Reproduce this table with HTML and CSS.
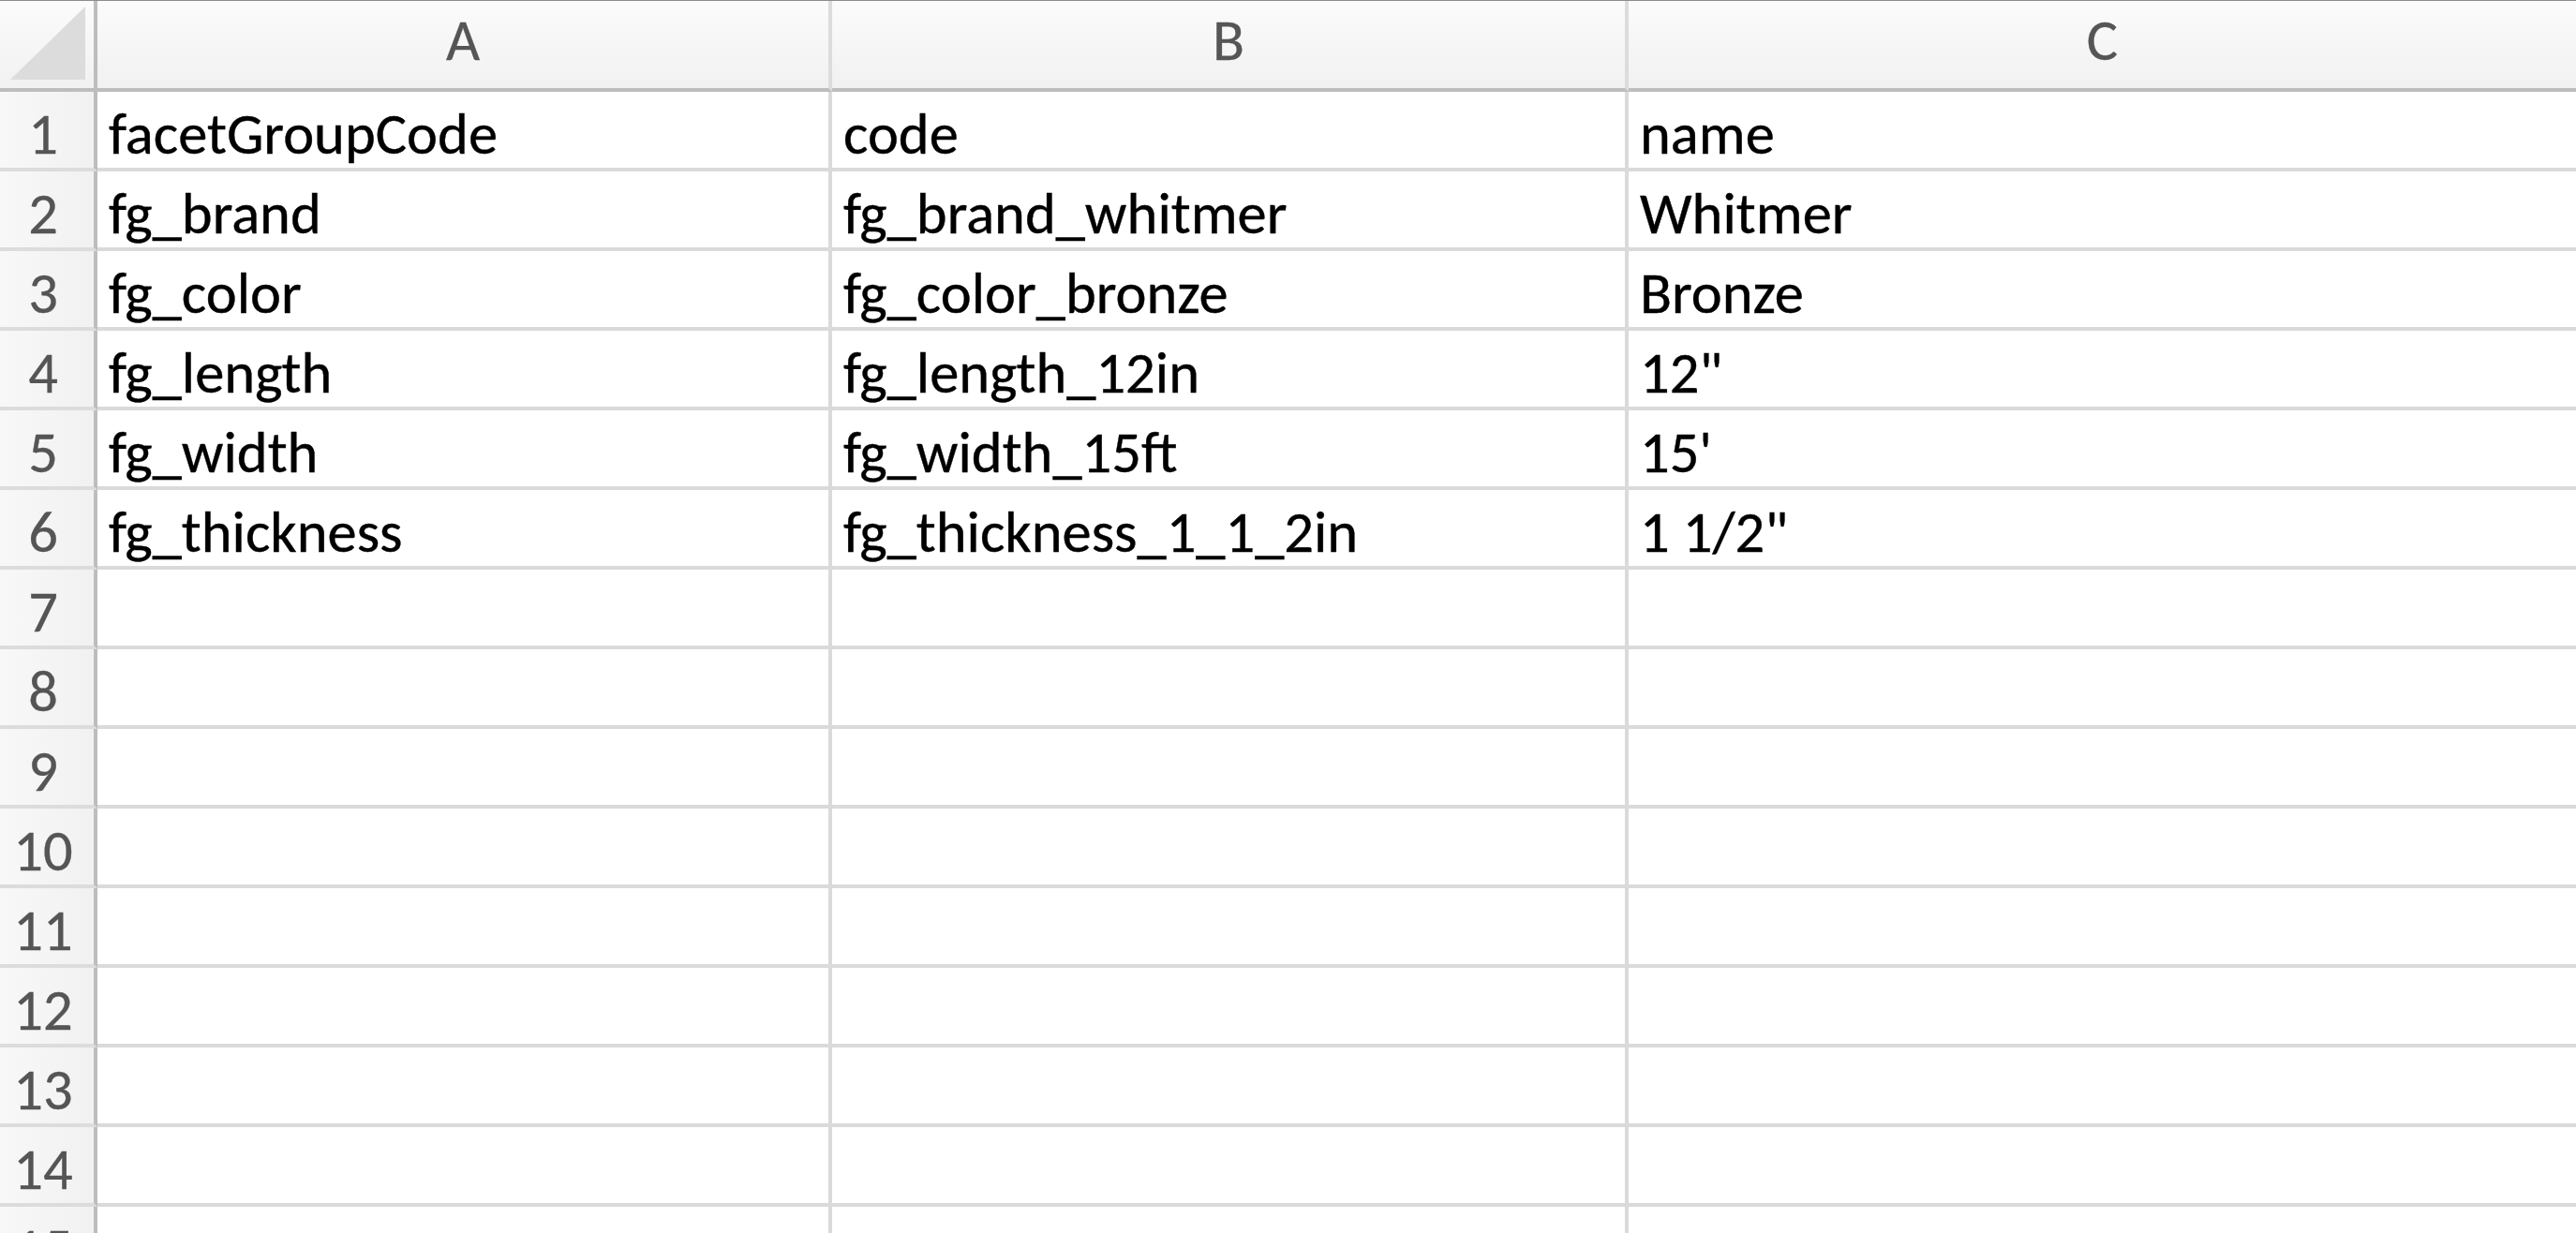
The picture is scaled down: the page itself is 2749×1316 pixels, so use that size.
FILE: index.html
```html
<!DOCTYPE html>
<html>
<head>
<meta charset="utf-8">
<link rel="stylesheet" href="styles.css">
</head>
<body>
<div class="sheet">
  <div class="corner"><div class="tri"></div></div>
  <div class="colhead">A</div>
  <div class="colhead">B</div>
  <div class="colhead last">C</div>

  <div class="rowhead">1</div><div class="cell">facetGroupCode</div><div class="cell">code</div><div class="cell last">name</div>
  <div class="rowhead">2</div><div class="cell">fg_brand</div><div class="cell">fg_brand_whitmer</div><div class="cell last">Whitmer</div>
  <div class="rowhead">3</div><div class="cell">fg_color</div><div class="cell">fg_color_bronze</div><div class="cell last">Bronze</div>
  <div class="rowhead">4</div><div class="cell">fg_length</div><div class="cell">fg_length_12in</div><div class="cell last">12"</div>
  <div class="rowhead">5</div><div class="cell">fg_width</div><div class="cell">fg_width_15ft</div><div class="cell last">15'</div>
  <div class="rowhead">6</div><div class="cell">fg_thickness</div><div class="cell">fg_thickness_1_1_2in</div><div class="cell last">1 1/2"</div>
  <div class="rowhead">7</div><div class="cell"></div><div class="cell"></div><div class="cell last"></div>
  <div class="rowhead">8</div><div class="cell"></div><div class="cell"></div><div class="cell last"></div>
  <div class="rowhead">9</div><div class="cell"></div><div class="cell"></div><div class="cell last"></div>
  <div class="rowhead">10</div><div class="cell"></div><div class="cell"></div><div class="cell last"></div>
  <div class="rowhead">11</div><div class="cell"></div><div class="cell"></div><div class="cell last"></div>
  <div class="rowhead">12</div><div class="cell"></div><div class="cell"></div><div class="cell last"></div>
  <div class="rowhead">13</div><div class="cell"></div><div class="cell"></div><div class="cell last"></div>
  <div class="rowhead">14</div><div class="cell"></div><div class="cell"></div><div class="cell last"></div>
  <div class="rowhead">15</div><div class="cell"></div><div class="cell"></div><div class="cell last"></div>
</div>
</body>
</html>
```
FILE: styles.css
```css
html, body {
  margin: 0;
  padding: 0;
  background: #ffffff;
  overflow: hidden;
}
.sheet {
  display: grid;
  grid-template-columns: 104px 784px 850px 1fr;
  grid-template-rows: 97px;
  grid-auto-rows: 85px;
  border-top: 1px solid #8c8c8c;
  width: 2749px;
  font-family: Carlito, "Open Sans", Lato, sans-serif;
  font-size: 62.5px;
  line-height: 62.5px;
}
.corner, .colhead {
  box-sizing: border-box;
  background: linear-gradient(#fbfbfb, #f1f1f1);
  border-bottom: 4px solid #bdbdbd;
  border-right: 4px solid #dcdcdc;
}
.corner {
  border-right-color: #bdbdbd;
  position: relative;
}
.tri {
  position: absolute;
  left: 11px;
  top: 6px;
  width: 80px;
  height: 78px;
  background: #dcdcdc;
  clip-path: polygon(100% 0, 100% 100%, 0 100%);
}
.colhead {
  color: #555555;
  text-align: center;
  padding-top: 11px;
  -webkit-text-stroke: 0.3px #555555;
}
.colhead.last, .cell.last {
  border-right: none;
}
.rowhead {
  box-sizing: border-box;
  background: linear-gradient(90deg, #f8f8f8, #f1f1f1);
  border-right: 4px solid #bdbdbd;
  border-bottom: 4px solid #dcdcdc;
  color: #555555;
  text-align: center;
  padding-right: 8px;
  padding-top: 14px;
  -webkit-text-stroke: 0.3px #555555;
}
.cell {
  box-sizing: border-box;
  border-right: 4px solid #dadada;
  border-bottom: 4px solid #dadada;
  color: #000000;
  padding-left: 12px;
  padding-top: 14px;
  white-space: nowrap;
  -webkit-text-stroke: 0.4px #000000;
}
```
